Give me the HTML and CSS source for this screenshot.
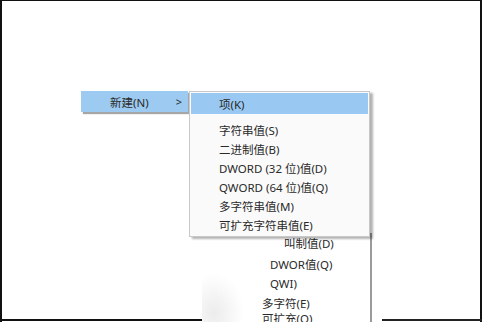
FILE: index.html
```html
<!DOCTYPE html>
<html lang="zh-CN">
<head>
<meta charset="utf-8">
<link rel="stylesheet" href="styles.css">
</head>
<body>
<div class="frame">
  <div class="menu-main">
    <div class="main-item">
      <span class="main-label">新建(N)</span>
      <span class="main-arrow">&gt;</span>
    </div>
  </div>

  <div class="ghost">
    <div class="ghost-line"></div>
    <span class="g g1">叫制值(D)</span>
    <span class="g g2">DWOR值(Q)</span>
    <span class="g g3">QWI)</span>
    <span class="g g4">多字符(E)</span>
    <span class="g g5">可扩充(Q)</span>
  </div>

  <div class="submenu">
    <div class="sub-item active">项(K)</div>
    <div class="sub-gap"></div>
    <div class="sub-item">字符串值(S)</div>
    <div class="sub-item">二进制值(B)</div>
    <div class="sub-item">DWORD (32 位)值(D)</div>
    <div class="sub-item">QWORD (64 位)值(Q)</div>
    <div class="sub-item">多字符串值(M)</div>
    <div class="sub-item">可扩充字符串值(E)</div>
  </div>
</div>
</body>
</html>
```

FILE: styles.css
```css
html, body {
  margin: 0;
  padding: 0;
  background: #ffffff;
}

body {
  width: 482px;
  height: 322px;
  overflow: hidden;
  font-family: "Noto Sans", "Noto Sans CJK SC", sans-serif;
  font-size: 11.5px;
  color: #2a2a2a;
}

.frame {
  position: relative;
  box-sizing: border-box;
  width: 482px;
  height: 322px;
  border-top: 1px solid #111;
  border-left: 2px solid #111;
  border-right: 2px solid #111;
  background: #fff;
}

.frame::before {
  content: "";
  position: absolute;
  left: -2px;
  bottom: 1px;
  width: 207px;
  height: 2px;
  background: #111;
}

.frame::after {
  content: "";
  position: absolute;
  left: 380px;
  bottom: 1px;
  width: 100px;
  height: 2px;
  background: #222;
}

.menu-main {
  position: absolute;
  left: 79px;
  top: 90px;
  width: 107px;
}

.main-item {
  display: flex;
  align-items: center;
  height: 21px;
  background: #9ccaf0;
  box-shadow: 2px 2px 1px rgba(0, 0, 0, 0.35);
}

.main-label {
  margin-left: 29px;
  flex: 1;
}

.main-arrow {
  margin-right: 6px;
  font-size: 11px;
}

.submenu {
  position: absolute;
  left: 187px;
  top: 90px;
  width: 177px;
  padding: 1px 1px 2px 1px;
  background: #fafafa;
  border: 1px solid #c8c8c8;
  box-shadow: 3px 2px 2px rgba(0, 0, 0, 0.3);
}

.sub-item {
  display: flex;
  align-items: center;
  height: 19px;
  padding-left: 28px;
  white-space: nowrap;
}

.sub-item.active {
  height: 21px;
  background: #99c9f2;
}

.sub-gap {
  height: 6px;
}

.ghost {
  position: absolute;
  left: 200px;
  top: 232px;
  width: 168px;
  height: 90px;
  border-right: 2px solid #9a9a9a;
  background:
    radial-gradient(ellipse 30px 40px at 12px 80px, rgba(200, 200, 200, 0.35), rgba(255, 255, 255, 0) 100%),
    #ffffff;
}

.ghost-line {
  height: 1px;
  margin-right: 40px;
  background: #c0c0c0;
}

.g {
  position: absolute;
  white-space: nowrap;
  line-height: 14px;
}

.g1 { left: 82px; top: 4px; }
.g2 { left: 68px; top: 25px; }
.g3 { left: 68px; top: 44px; }
.g4 { left: 60px; top: 64px; }
.g5 { left: 60px; top: 79px; }
```
